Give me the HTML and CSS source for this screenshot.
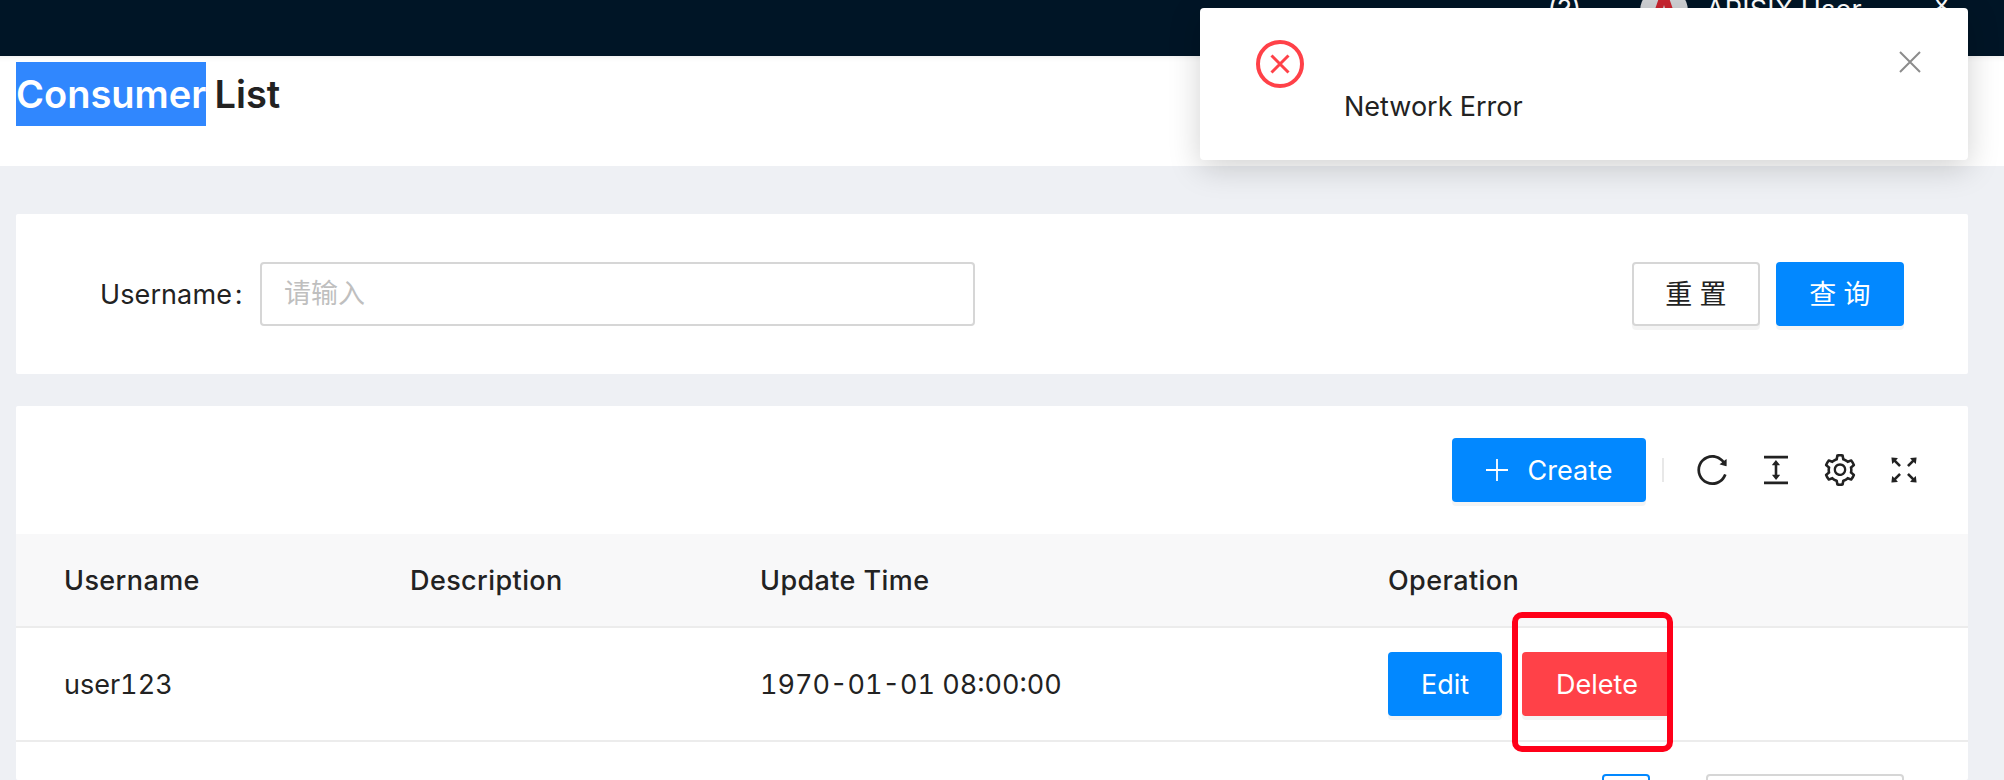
FILE: index.html
```html
<!DOCTYPE html>
<html lang="en">
<head>
<meta charset="utf-8">
<title>Consumer List</title>
<link rel="stylesheet" href="styles.css">
</head>
<body>
<header class="topbar">
  <span class="help">(?)</span>
  <span class="avatar"><svg viewBox="0 0 48 48" width="48" height="48"><path d="M24 -4 L9 40 L17 40 L24 18 L31 40 L39 40 Z" fill="#c9242f"/></svg></span>
  <span class="user">APISIX User</span>
  <span class="lang">文</span>
</header>
<section class="pagehead"><h1 class="title"><span class="sel">Consumer</span> List</h1></section>
<main class="content">
  <section class="card search">
    <label class="label">Username<span class="colon">:</span></label>
    <div class="input">请输入</div>
    <div class="spacer"></div>
    <button class="btn ghost">重 置</button>
    <button class="btn primary">查 询</button>
  </section>
  <section class="card tablecard">
    <div class="toolbar">
      <button class="btn primary create"><svg width="22" height="22" viewBox="0 0 22 22"><path d="M11 0v22M0 11h22" stroke="#fff" stroke-width="1.8" fill="none"/></svg>Create</button>
      <span class="divider"></span>
      <svg class="tool" viewBox="64 64 896 896"><path d="M909.1 209.3l-56.4 44.1C775.8 155.1 656.2 92 521.9 92 290 92 102.3 279.5 102 511.5 101.7 743.7 289.8 932 521.9 932c181.3 0 335.8-115 394.6-276.1 1.5-4.2-.7-8.9-4.9-10.3l-56.7-19.5a8 8 0 0 0-10.1 4.8c-1.8 5-3.8 10-5.9 14.9-17.3 41-42.1 77.8-73.7 109.4A344.77 344.77 0 0 1 655.9 829c-42.3 17.9-87.4 27-133.8 27-46.5 0-91.5-9.1-133.8-27A341.5 341.5 0 0 1 279 755.2a342.16 342.16 0 0 1-73.7-109.4c-17.9-42.4-27-87.4-27-133.9s9.1-91.5 27-133.9c17.3-41 42.1-77.8 73.7-109.4 31.6-31.6 68.4-56.4 109.3-73.8 42.3-17.9 87.4-27 133.8-27 46.5 0 91.5 9.1 133.8 27a341.5 341.5 0 0 1 109.3 73.8c9.9 9.9 19.2 20.4 27.8 31.4l-60.2 47a8 8 0 0 0 3 14.1l175.6 43c5 1.2 9.9-2.6 9.9-7.7l.8-180.9c-.1-6.6-7.8-10.3-13-6.2z"/></svg>
      <svg class="tool" viewBox="64 64 896 896"><path d="M840 836H184c-4.4 0-8 3.6-8 8v60c0 4.4 3.6 8 8 8h656c4.4 0 8-3.6 8-8v-60c0-4.4-3.6-8-8-8zm0-724H184c-4.4 0-8 3.6-8 8v60c0 4.4 3.6 8 8 8h656c4.4 0 8-3.6 8-8v-60c0-4.4-3.6-8-8-8zM610.8 378c6 0 9.4-7 5.7-11.7L515.7 238.7a7.14 7.14 0 0 0-11.3 0L403.6 366.3a7.18 7.18 0 0 0 5.7 11.7H476v268h-62.8c-6 0-9.4 7-5.7 11.6l100.8 127.5c2.9 3.7 8.5 3.7 11.3 0l100.8-127.5c3.7-4.7.4-11.6-5.7-11.6H548V378h62.8z"/></svg>
      <svg class="tool" viewBox="64 64 896 896"><path d="M924.8 625.7l-65.5-56c3.1-19 4.7-38.4 4.7-57.8s-1.6-38.8-4.7-57.8l65.5-56a32.03 32.03 0 0 0 9.3-35.2l-.9-2.6a443.74 443.74 0 0 0-79.7-137.9l-1.8-2.1a32.12 32.12 0 0 0-35.1-9.5l-81.3 28.9c-30-24.6-63.5-44-99.7-57.6l-15.7-85a32.05 32.05 0 0 0-25.8-25.7l-2.7-.5c-52.1-9.4-106.9-9.4-159 0l-2.7.5a32.05 32.05 0 0 0-25.8 25.7l-15.8 85.4a351.86 351.86 0 0 0-99 57.4l-81.9-29.1a32 32 0 0 0-35.1 9.5l-1.8 2.1a446.02 446.02 0 0 0-79.7 137.9l-.9 2.6c-4.5 12.5-.8 26.5 9.3 35.2l66.3 56.6c-3.1 18.8-4.6 38-4.6 57.1 0 19.2 1.5 38.4 4.6 57.1L99 625.5a32.03 32.03 0 0 0-9.3 35.2l.9 2.6c18.1 50.4 44.9 96.9 79.7 137.9l1.8 2.1a32.12 32.12 0 0 0 35.1 9.5l81.9-29.1c29.8 24.5 63.1 43.9 99 57.4l15.8 85.4a32.05 32.05 0 0 0 25.8 25.7l2.7.5a449.4 449.4 0 0 0 159 0l2.7-.5a32.05 32.05 0 0 0 25.8-25.7l15.7-85a350 350 0 0 0 99.7-57.6l81.3 28.9a32 32 0 0 0 35.1-9.5l1.8-2.1c34.8-41.1 61.6-87.5 79.7-137.9l.9-2.6c4.5-12.3.8-26.3-9.3-35zM788.3 465.9c2.5 15.1 3.8 30.6 3.8 46.1s-1.3 31-3.8 46.1l-6.6 40.1 74.7 63.9a370.03 370.03 0 0 1-42.6 73.6L721 702.8l-31.4 25.8c-23.9 19.6-50.5 35-79.3 45.8l-38.1 14.3-17.9 97a377.5 377.5 0 0 1-85 0l-17.9-97.2-37.8-14.5c-28.5-10.8-55-26.2-78.7-45.7l-31.4-25.9-93.4 33.2c-17-22.9-31.2-47.6-42.6-73.6l75.5-64.5-6.5-40c-2.4-14.9-3.7-30.3-3.7-45.5 0-15.3 1.2-30.6 3.7-45.5l6.5-40-75.5-64.5c11.3-26.1 25.6-50.7 42.6-73.6l93.4 33.2 31.4-25.9c23.7-19.5 50.2-34.9 78.7-45.7l37.9-14.3 17.9-97.2c28.1-3.2 56.8-3.2 85 0l17.9 97 38.1 14.3c28.7 10.8 55.4 26.2 79.3 45.8l31.4 25.8 92.8-32.9c17 22.9 31.2 47.6 42.6 73.6L781.8 426l6.5 39.9zM512 326c-97.2 0-176 78.8-176 176s78.8 176 176 176 176-78.8 176-176-78.8-176-176-176zm79.2 255.2A111.6 111.6 0 0 1 512 614c-29.9 0-58-11.7-79.2-32.8A111.6 111.6 0 0 1 400 502c0-29.9 11.7-58 32.8-79.2C454 401.6 482.1 390 512 390c29.9 0 58 11.6 79.2 32.8A111.6 111.6 0 0 1 624 502c0 29.9-11.7 58-32.8 79.2z"/></svg>
      <svg class="tool" viewBox="64 64 896 896"><path d="M290 236.4l43.9-43.9a8.01 8.01 0 0 0-4.7-13.6L169 160c-5.1-.6-9.5 3.7-8.9 8.9L179 329.1c.8 6.6 8.9 9.4 13.6 4.7l43.7-43.7L370 423.7c3.1 3.1 8.2 3.1 11.3 0l42.4-42.3c3.1-3.1 3.1-8.2 0-11.3L290 236.4zm352.7 187.3c3.1 3.1 8.2 3.1 11.3 0l133.7-133.6 43.7 43.7a8.01 8.01 0 0 0 13.6-4.7L863.9 169c.6-5.1-3.7-9.5-8.9-8.9L694.8 179c-6.6.8-9.4 8.9-4.7 13.6l43.9 43.9L600.3 370a8.03 8.03 0 0 0 0 11.3l42.4 42.4zM845 694.9c-.8-6.6-8.9-9.4-13.6-4.7l-43.7 43.7L654 600.3a8.03 8.03 0 0 0-11.3 0l-42.4 42.3a8.03 8.03 0 0 0 0 11.3L734 787.6l-43.9 43.9a8.01 8.01 0 0 0 4.7 13.6L855 864c5.1.6 9.5-3.7 8.9-8.9L845 694.9zm-463.7-94.6a8.03 8.03 0 0 0-11.3 0L236.3 733.9l-43.7-43.7a8.01 8.01 0 0 0-13.6 4.7L160.1 855c-.6 5.1 3.7 9.5 8.9 8.9L329.2 845c6.6-.8 9.4-8.9 4.7-13.6L290 787.6 423.7 654c3.1-3.1 3.1-8.2 0-11.3l-42.4-42.4z"/></svg>
    </div>
    <div class="row head">
      <div class="c1">Username</div><div class="c2">Description</div><div class="c3">Update Time</div><div class="c4">Operation</div>
    </div>
    <div class="row body">
      <div class="c1">user123</div><div class="c2"></div><div class="c3">1970-01-01 08:00:00</div>
      <div class="c4 ops">
        <button class="btn primary small">Edit</button>
        <button class="btn danger small">Delete</button>
        <span class="mark"></span>
      </div>
    </div>
    <div class="pager"><span class="pageno"></span><span class="pagesize"></span></div>
  </section>
</main>
<aside class="notice">
  <svg class="err" viewBox="0 0 48 48"><circle cx="24" cy="24" r="22" fill="none" stroke="#ff4148" stroke-width="4"/><path d="M15.500 15.500l17 17M32.500 15.500l-17 17" stroke="#ff4148" stroke-width="3"/></svg>
  <div class="msg">Network Error</div>
  <svg class="close" viewBox="0 0 24 24"><path d="M2 2l20 20M22 2L2 22" stroke="#8c8c8c" stroke-width="2" fill="none"/></svg>
</aside>
</body>
</html>
```
FILE: styles.css
```css
* { box-sizing: border-box; }
html, body { margin: 0; height: 780px; overflow: hidden; }
body { background: #eef0f4; font-family: Inter, "Noto Sans CJK SC", sans-serif; color: #222; font-size: 27px; font-feature-settings: "tnum"; position: relative; }
.topbar { height: 56px; background: #001526; color: #fff; position: relative; overflow: hidden; }
.help { position: absolute; left: 1547px; top: -7px; }
.avatar { position: absolute; left: 1640px; top: -13px; width: 48px; height: 48px; border-radius: 50%; background: #d0d2d5; overflow: hidden; display: block; }
.user { position: absolute; left: 1706px; top: -7px; white-space: nowrap; letter-spacing: .2px; }
.lang { position: absolute; left: 1928px; top: -20px; }
.pagehead { height: 110px; background: #fff; padding: 6px 16px 0; box-shadow: inset 0 6px 6px -6px rgba(0,0,0,.1); }
.title { margin: 0; font-size: 38px; font-weight: 600; line-height: 64px; word-spacing: -2px; }
.sel { background: #3087fe; color: #fff; display: inline-block; }
.content { padding: 48px 36px 0 16px; display: flex; flex-direction: column; gap: 32px; }
.card { background: #fff; border-radius: 2px; }
.search { height: 160px; display: flex; align-items: center; padding: 0 64px 0 84px; }
.label { width: 160px; flex: none; letter-spacing: .1px; }
.colon { margin-left: 3px; }
.input { width: 715px; height: 64px; border: 2px solid #d6d6d6; border-radius: 4px; color: #bfbfbf; font-size: 27px; line-height: 60px; padding-left: 22px; }
.spacer { flex: 1; }
.btn { font-family: inherit; font-feature-settings: inherit; font-size: 27px; line-height: 1; height: 64px; border-radius: 4px; border: 0; padding: 0; box-shadow: 0 4px 0 rgba(0,0,0,.045); display: inline-flex; align-items: center; justify-content: center; }
.primary { background: #0288ff; color: #fff; }
.danger { background: #ff4148; color: #fff; }
.ghost { background: #fff; border: 2px solid #d6d6d6; color: #222; width: 128px; margin-right: 16px; }
.search .primary { width: 128px; }
.tablecard { height: 374px; }
.toolbar { height: 128px; display: flex; align-items: center; justify-content: flex-end; padding-right: 48px; }
.create { width: 194px; gap: 20px; }
.divider { width: 2px; height: 24px; background: #e8e8e8; margin: 0 32px 0 16px; }
.tool { width: 32px; height: 32px; margin-left: 32px; fill: #222; }
.divider + .tool { margin-left: 0; }
.row { display: grid; grid-template-columns: 346px 350px 628px 1fr; padding-left: 48px; align-items: center; }
.head { height: 94px; background: #f8f8f9; border-bottom: 2px solid #ececec; font-weight: 500; letter-spacing: .4px; }
.body { height: 114px; border-bottom: 2px solid #ececec; }
.ops { display: flex; gap: 20px; position: relative; }
.ops .primary { width: 114px; }
.ops .danger { width: 150px; }
.mark { position: absolute; left: 124px; top: -40px; width: 161px; height: 140px; border: 6px solid #ff0019; border-radius: 10px; }
.pager { position: relative; height: 50px; }
.pageno { position: absolute; left: 1586px; top: 32px; width: 48px; height: 40px; border: 2px solid #0288ff; border-radius: 4px; }
.pagesize { position: absolute; left: 1690px; top: 32px; width: 198px; height: 40px; border: 2px solid #d6d6d6; border-radius: 4px; }
.notice { position: absolute; left: 1200px; top: 8px; width: 768px; height: 152px; background: #fff; border-radius: 4px; box-shadow: 0 8px 32px rgba(0,0,0,.18); }
.err { position: absolute; left: 56px; top: 32px; width: 48px; height: 48px; }
.msg { position: absolute; left: 144px; top: 82px; white-space: nowrap; }
.close { position: absolute; left: 698px; top: 42px; width: 24px; height: 24px; }
```
